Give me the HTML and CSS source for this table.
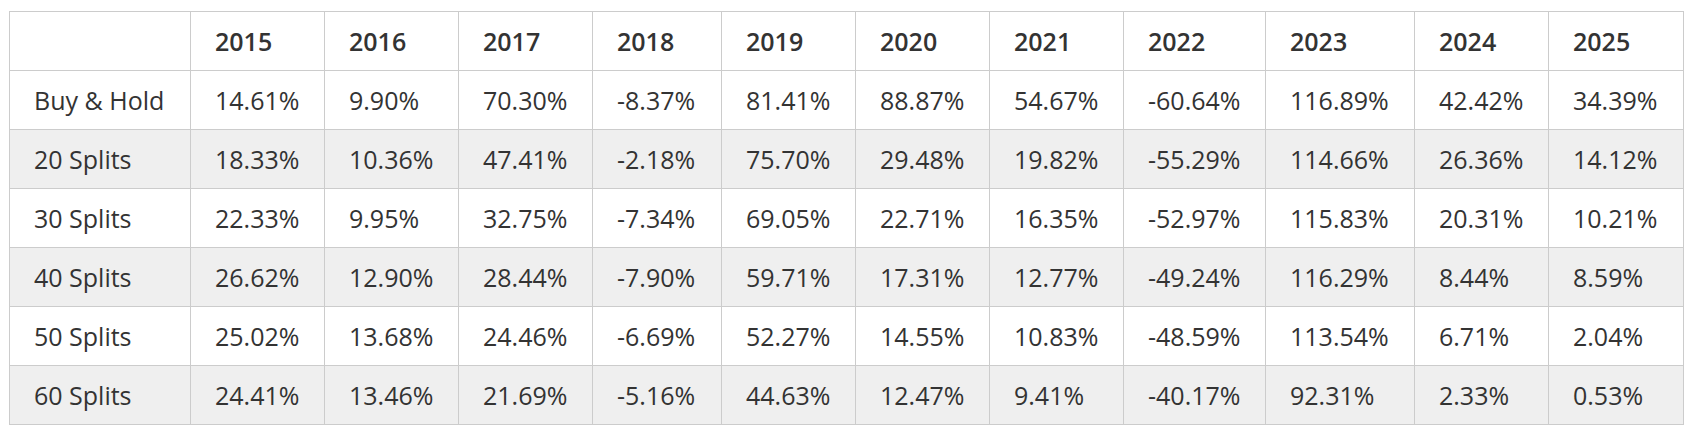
FILE: index.html
```html
<!DOCTYPE html>
<html>
<head>
<meta charset="utf-8">
<link rel="stylesheet" href="styles.css">
</head>
<body>
<div class="wrap">
<table class="returns">
<colgroup>
<col class="c-label"><col class="c-w134"><col class="c-w134"><col class="c-w134"><col class="c-w129"><col class="c-w134"><col class="c-w134"><col class="c-w134"><col class="c-w142"><col class="c-w149"><col class="c-w134"><col class="c-w135">
</colgroup>
<thead>
<tr><th></th><th>2015</th><th>2016</th><th>2017</th><th>2018</th><th>2019</th><th>2020</th><th>2021</th><th>2022</th><th>2023</th><th>2024</th><th>2025</th></tr>
</thead>
<tbody>
<tr><td>Buy &amp; Hold</td><td>14.61%</td><td>9.90%</td><td>70.30%</td><td>-8.37%</td><td>81.41%</td><td>88.87%</td><td>54.67%</td><td>-60.64%</td><td>116.89%</td><td>42.42%</td><td>34.39%</td></tr>
<tr><td>20 Splits</td><td>18.33%</td><td>10.36%</td><td>47.41%</td><td>-2.18%</td><td>75.70%</td><td>29.48%</td><td>19.82%</td><td>-55.29%</td><td>114.66%</td><td>26.36%</td><td>14.12%</td></tr>
<tr><td>30 Splits</td><td>22.33%</td><td>9.95%</td><td>32.75%</td><td>-7.34%</td><td>69.05%</td><td>22.71%</td><td>16.35%</td><td>-52.97%</td><td>115.83%</td><td>20.31%</td><td>10.21%</td></tr>
<tr><td>40 Splits</td><td>26.62%</td><td>12.90%</td><td>28.44%</td><td>-7.90%</td><td>59.71%</td><td>17.31%</td><td>12.77%</td><td>-49.24%</td><td>116.29%</td><td>8.44%</td><td>8.59%</td></tr>
<tr><td>50 Splits</td><td>25.02%</td><td>13.68%</td><td>24.46%</td><td>-6.69%</td><td>52.27%</td><td>14.55%</td><td>10.83%</td><td>-48.59%</td><td>113.54%</td><td>6.71%</td><td>2.04%</td></tr>
<tr><td>60 Splits</td><td>24.41%</td><td>13.46%</td><td>21.69%</td><td>-5.16%</td><td>44.63%</td><td>12.47%</td><td>9.41%</td><td>-40.17%</td><td>92.31%</td><td>2.33%</td><td>0.53%</td></tr>
</tbody>
</table>
</div>
</body>
</html>
```

FILE: styles.css
```css
html, body {
  margin: 0;
  padding: 0;
  background: #ffffff;
}

.wrap {
  padding: 11px 0 0 9px;
}

.returns {
  border-collapse: collapse;
  table-layout: fixed;
  width: 1675px;
  font-family: "Open Sans", "Liberation Sans", sans-serif;
  font-size: 25px;
  line-height: 38px;
  color: #333333;
}

.returns th,
.returns td {
  border: 1px solid #cccccc;
  padding: 10px 10px 10px 24px;
  text-align: left;
  white-space: nowrap;
}

.returns th {
  font-weight: 600;
}

.returns tbody tr:nth-child(even) td {
  background: #efefef;
}

.c-label { width: 181px; }
.c-w129 { width: 129px; }
.c-w134 { width: 134px; }
.c-w135 { width: 135px; }
.c-w142 { width: 142px; }
.c-w149 { width: 149px; }
```
